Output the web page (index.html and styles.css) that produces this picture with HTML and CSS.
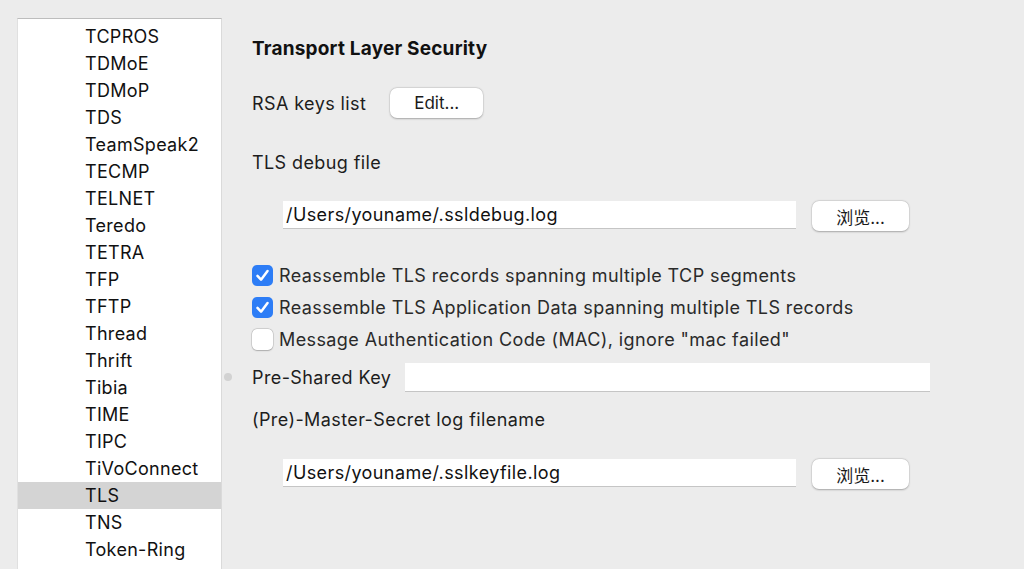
FILE: index.html
```html
<!DOCTYPE html>
<html>
<head>
<meta charset="utf-8">
<link rel="stylesheet" href="styles.css">
</head>
<body>
<div class="window">
  <div class="list">
    <div class="item">TCPROS</div>
    <div class="item">TDMoE</div>
    <div class="item">TDMoP</div>
    <div class="item">TDS</div>
    <div class="item">TeamSpeak2</div>
    <div class="item">TECMP</div>
    <div class="item">TELNET</div>
    <div class="item">Teredo</div>
    <div class="item">TETRA</div>
    <div class="item">TFP</div>
    <div class="item">TFTP</div>
    <div class="item">Thread</div>
    <div class="item">Thrift</div>
    <div class="item">Tibia</div>
    <div class="item">TIME</div>
    <div class="item">TIPC</div>
    <div class="item">TiVoConnect</div>
    <div class="item selected">TLS</div>
    <div class="item">TNS</div>
    <div class="item">Token-Ring</div>
    <div class="item">TPCP</div>
  </div>
  <div class="pane">
    <h1 class="title">Transport Layer Security</h1>
    <div class="row rsa">
      <span class="label">RSA keys list</span>
      <button class="btn edit">Edit...</button>
    </div>
    <div class="label heading">TLS debug file</div>
    <div class="file-row">
      <div class="input path">/Users/youname/.ssldebug.log</div>
      <button class="btn browse">浏览...</button>
    </div>
    <div class="checks">
      <label class="check"><span class="box on"><svg viewBox="0 0 20 20"><path d="M5.2 10.4 L8.6 14 L14.8 5.8" fill="none" stroke="#fff" stroke-width="2.4" stroke-linecap="round" stroke-linejoin="round"/></svg></span>Reassemble TLS records spanning multiple TCP segments</label>
      <label class="check"><span class="box on"><svg viewBox="0 0 20 20"><path d="M5.2 10.4 L8.6 14 L14.8 5.8" fill="none" stroke="#fff" stroke-width="2.4" stroke-linecap="round" stroke-linejoin="round"/></svg></span>Reassemble TLS Application Data spanning multiple TLS records</label>
      <label class="check"><span class="box"></span>Message Authentication Code (MAC), ignore "mac failed"</label>
    </div>
    <div class="row psk">
      <span class="label">Pre-Shared Key</span>
      <div class="input wide"></div>
    </div>
    <div class="label heading master">(Pre)-Master-Secret log filename</div>
    <div class="file-row second">
      <div class="input path">/Users/youname/.sslkeyfile.log</div>
      <button class="btn browse">浏览...</button>
    </div>
  </div>
</div>
</body>
</html>
```
FILE: styles.css
```css
* { box-sizing: border-box; }
html, body {
  margin: 0;
  padding: 0;
  background: #ececec;
  width: 1024px;
  height: 569px;
  overflow: hidden;
}
body {
  font-family: "Inter", "Liberation Sans", "Noto Sans CJK SC", sans-serif;
  font-size: 18px;
  letter-spacing: 0.4px;
  color: #1d1d1d;
}
.window {
  display: flex;
  padding: 18px 0 0 17px;
  height: 569px;
}
.list {
  width: 205px;
  background: #fff;
  border-top: 1px solid #bdbdbd;
  border-left: 1px solid #e0e0e0;
  border-right: 1px solid #dadada;
  padding-top: 4px;
  overflow: hidden;
  flex-shrink: 0;
  letter-spacing: 0.3px;
}
.item {
  height: 27px;
  line-height: 27px;
  padding-left: 67px;
  color: #111;
}
.item.selected { background: #d4d4d4; }
.pane {
  padding-left: 30px;
  padding-top: 20px;
  display: flex;
  flex-direction: column;
  position: relative;
}
.title {
  margin: 0;
  font-size: 19px;
  font-weight: 700;
  letter-spacing: 0.2px;
  line-height: 22px;
  color: #111;
}
.label { color: #1d1d1d; }
.row { display: flex; align-items: center; }
.rsa { margin-top: 28px; gap: 24px; }
.btn {
  font: inherit;
  font-size: 17px;
  color: #1a1a1a;
  background: #fff;
  border: none;
  border-radius: 7px;
  box-shadow: 0 0.5px 2px rgba(0,0,0,0.28), 0 0 0 0.5px rgba(0,0,0,0.06);
  padding: 0;
  height: 30px;
}
.edit { width: 93px; }
.heading { margin-top: 34px; line-height: 22px; }
.file-row {
  display: flex;
  align-items: flex-start;
  margin-top: 27px;
  margin-left: 31px;
  gap: 16px;
}
.input {
  background: #fff;
  border-bottom: 1px solid #c5c5c5;
  height: 28px;
  line-height: 27px;
  padding-left: 3px;
  color: #111;
}
.path { width: 513px; }
.browse { width: 97px; }
.checks {
  margin-top: 34px;
  display: flex;
  flex-direction: column;
  gap: 11px;
}
.check {
  display: flex;
  align-items: center;
  gap: 6px;
  height: 21px;
  color: #2a2a2a;
}
.box {
  width: 21px;
  height: 21px;
  border-radius: 5px;
  background: #fff;
  box-shadow: 0 0 0 0.5px rgba(0,0,0,0.18), 0 0.5px 1.5px rgba(0,0,0,0.2);
  display: inline-flex;
  flex-shrink: 0;
}
.box.on { background: #2d7df6; box-shadow: none; }
.box svg { width: 21px; height: 21px; }
.psk { margin-top: 13px; gap: 14px; position: relative; }
.psk::before {
  content: "";
  position: absolute;
  left: -28px;
  top: 10px;
  width: 8px;
  height: 8px;
  border-radius: 50%;
  background: #d2d2d2;
}
.wide { width: 525px; height: 29px; }
.master { margin-top: 17px; }
.second { margin-top: 28px; }
```
